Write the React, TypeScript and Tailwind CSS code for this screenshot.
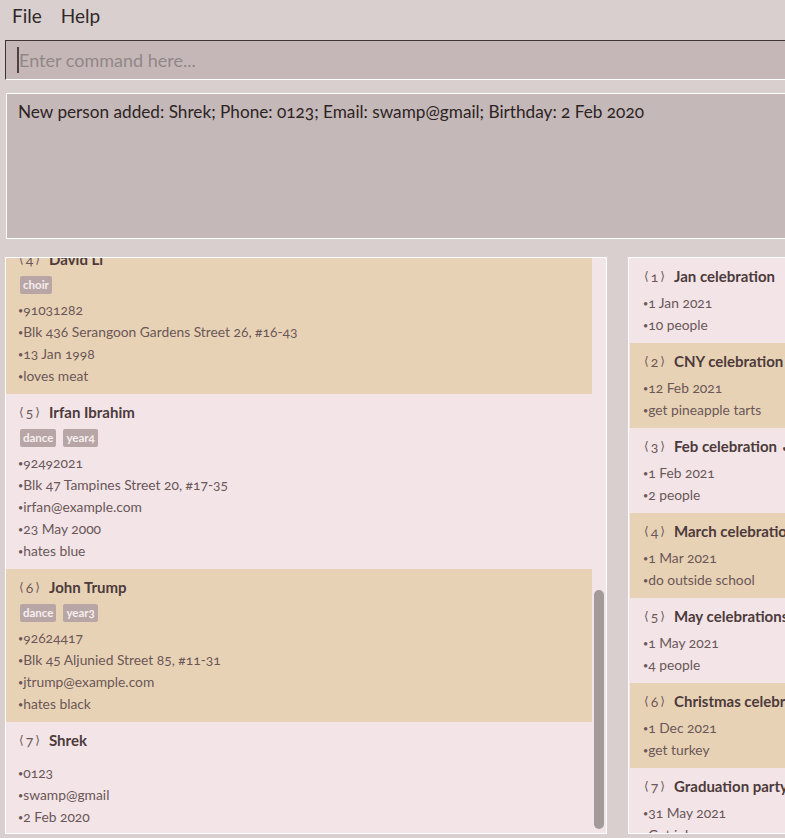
import React from 'react';

interface Person {
  index: number;
  name: string;
  tags: string[];
  lines: string[];
}

interface Event {
  index: number;
  title: string;
  lines: string[];
}

const people: Person[] = [
  {
    index: 4,
    name: 'David Li',
    tags: ['choir'],
    lines: ['91031282', 'Blk 436 Serangoon Gardens Street 26, #16-43', '13 Jan 1998', 'loves meat'],
  },
  {
    index: 5,
    name: 'Irfan Ibrahim',
    tags: ['dance', 'year4'],
    lines: ['92492021', 'Blk 47 Tampines Street 20, #17-35', 'irfan@example.com', '23 May 2000', 'hates blue'],
  },
  {
    index: 6,
    name: 'John Trump',
    tags: ['dance', 'year3'],
    lines: ['92624417', 'Blk 45 Aljunied Street 85, #11-31', 'jtrump@example.com', 'hates black'],
  },
  {
    index: 7,
    name: 'Shrek',
    tags: [],
    lines: ['0123', 'swamp@gmail', '2 Feb 2020'],
  },
];

const events: Event[] = [
  { index: 1, title: 'Jan celebration', lines: ['1 Jan 2021', '10 people'] },
  { index: 2, title: 'CNY celebration', lines: ['12 Feb 2021', 'get pineapple tarts'] },
  { index: 3, title: 'Feb celebration ✓', lines: ['1 Feb 2021', '2 people'] },
  { index: 4, title: 'March celebration', lines: ['1 Mar 2021', 'do outside school'] },
  { index: 5, title: 'May celebrations', lines: ['1 May 2021', '4 people'] },
  { index: 6, title: 'Christmas celebration', lines: ['1 Dec 2021', 'get turkey'] },
  { index: 7, title: 'Graduation party', lines: ['31 May 2021', 'Get job'] },
];

const Title: React.FC<{ index: number; text: string }> = ({ index, text }) => (
  <div className="flex items-center h-[20px] whitespace-nowrap">
    <span className="text-[14px] text-[#6a5757] w-[28px] flex items-center">
      <span className="font-['DejaVu_Sans'] text-[12px]">⟨</span>
      <span className="mx-[2px] oldstyle-nums">{index}</span>
      <span className="font-['DejaVu_Sans'] text-[12px]">⟩</span>
    </span>
    <span className="ml-[2px] text-[15px] font-bold text-[#4d3b3b]">{text}</span>
  </div>
);

const Line: React.FC<{ text: string }> = ({ text }) => (
  <div className="h-[22px] leading-[22px] text-[13.8px] text-[#6a5757] whitespace-nowrap oldstyle-nums">
    <span className="text-[9px] align-[1px]">•</span>
    {text}
  </div>
);

export default function App() {
  return (
    <div className="w-[785px] h-[838px] overflow-hidden bg-[#dacfcf] font-['Lato',sans-serif]">
      <div className="w-[1000px]">
        {/* menu */}
        <div className="h-[33px] flex items-center text-[19px] text-[#2f2929]">
          <span className="ml-[12px]">File</span>
          <span className="ml-[19px]">Help</span>
        </div>

        {/* command box */}
        <div className="ml-[5px] mt-[7px] h-[40px] border-t border-l border-[#3f3535] border-b border-b-white bg-[#c5b7b7] flex items-center">
          <span className="ml-[11px] w-[2px] h-[26px] bg-[#4d4040]" />
          <span className="text-[18px] text-[#918787]">Enter command here...</span>
        </div>

        {/* result box */}
        <div className="ml-[6px] mt-[13px] h-[146px] border border-white bg-[#c5b8b8] pl-[11px] pt-[6px] text-[17.2px] leading-[24px] text-[#2c2424] oldstyle-nums">
          New person added: Shrek; Phone: 0123; Email: swamp@gmail; Birthday: 2 Feb 2020
        </div>

        {/* panels */}
        <div className="flex mt-[18px]">
          <div className="ml-[5px] w-[602px] h-[577px] border border-white bg-[#f2e4e7] flex overflow-hidden">
            <div className="w-[586px] mt-[-17px] flex flex-col">
              {people.map((p, i) => (
                <div
                  key={p.index}
                  className={`${i % 2 === 0 ? 'bg-[#e8d2b6]' : 'bg-[#f2e4e7]'} pl-[13px] pt-[8px] pb-[7px] flex flex-col`}
                >
                  <Title index={p.index} text={p.name} />
                  <div className="mt-[7px] flex gap-[7px] pl-[1px]">
                    {p.tags.map((t) => (
                      <span
                        key={t}
                        className="h-[18px] px-[3px] rounded-[2px] bg-[#b8a6a6] text-[11.5px] font-bold leading-[18px] text-[#f6eeee] oldstyle-nums"
                      >
                        {t}
                      </span>
                    ))}
                  </div>
                  <div className="mt-[5px] ml-[-1px]">
                    {p.lines.map((l) => (
                      <Line key={l} text={l} />
                    ))}
                  </div>
                </div>
              ))}
            </div>
            <div className="w-[14px] flex flex-col justify-end pb-[4px] pl-[2px]">
              <div className="w-[10px] h-[239px] rounded-[5px] bg-[#a39a9a]" />
            </div>
          </div>

          <div className="ml-[21px] w-[360px] h-[577px] border border-white bg-[#f2e4e7] overflow-hidden">
            <div className="ml-[1px] flex flex-col">
              {events.map((e, i) => (
                <div
                  key={e.index}
                  className={`${i % 2 === 0 ? 'bg-[#f2e4e7]' : 'bg-[#e8d2b6]'} h-[85px] pl-[14px] pt-[8px] flex flex-col`}
                >
                  <Title index={e.index} text={e.title} />
                  <div className="mt-[6px] ml-[-1px]">
                    {e.lines.map((l) => (
                      <Line key={l} text={l} />
                    ))}
                  </div>
                </div>
              ))}
            </div>
          </div>
        </div>
      </div>
    </div>
  );
}
